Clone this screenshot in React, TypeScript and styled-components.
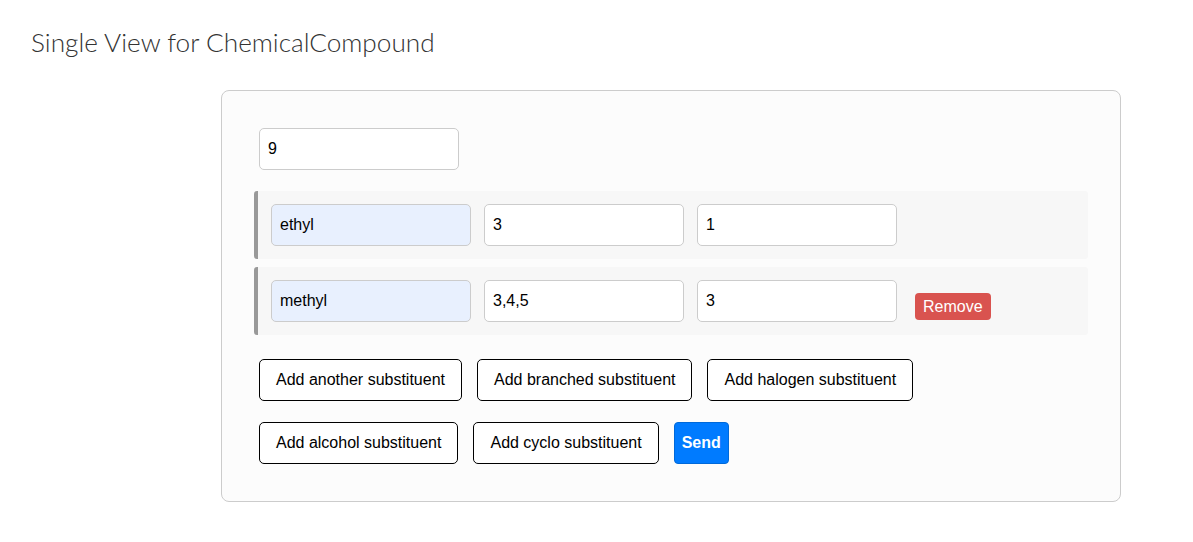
import React from 'react';
import { createGlobalStyle, styled } from 'styled-components';

const GlobalStyle = createGlobalStyle`
  body {
    margin: 0;
    background: #ffffff;
    font-family: 'Liberation Sans', Arial, sans-serif;
  }
`;

const substituents = [
  { name: 'ethyl', position: '3', count: '1', removable: false },
  { name: 'methyl', position: '3,4,5', count: '3', removable: true },
];

const App: React.FC = () => {
  return (
    <Page>
      <GlobalStyle />
      <Title>Single View for ChemicalCompound</Title>
      <Card>
        <Field defaultValue='9' />
        <Rows>
          {substituents.map((s) => (
            <SubRow key={s.name}>
              <Field defaultValue={s.name} $filled />
              <Field defaultValue={s.position} />
              <Field defaultValue={s.count} />
              {s.removable && <RemoveButton type='button'>Remove</RemoveButton>}
            </SubRow>
          ))}
        </Rows>
        <Actions>
          <ActionLine>
            <OutlineButton type='button'>Add another substituent</OutlineButton>
            <OutlineButton type='button'>Add branched substituent</OutlineButton>
            <OutlineButton type='button'>Add halogen substituent</OutlineButton>
          </ActionLine>
          <ActionLine>
            <OutlineButton type='button'>Add alcohol substituent</OutlineButton>
            <OutlineButton type='button'>Add cyclo substituent</OutlineButton>
            <SendButton type='button'>Send</SendButton>
          </ActionLine>
        </Actions>
      </Card>
    </Page>
  );
};

export default App;

const Page = styled.div`
  padding: 24px 0 40px 0;
`;

const Title = styled.h1`
  margin: 0 0 30px 31px;
  font-family: Lato, 'Open Sans', sans-serif;
  font-weight: 300;
  font-size: 26.2px;
  line-height: 36px;
  color: #333333;
`;

const Card = styled.div`
  margin-left: 221px;
  width: 900px;
  box-sizing: border-box;
  padding: 37px 32px 37px 37px;
  border: 1px solid #cccccc;
  border-radius: 8px;
  background: #fcfcfc;
`;

const Field = styled.input<{ $filled?: boolean }>`
  width: 200px;
  height: 42px;
  box-sizing: border-box;
  padding: 0 8px;
  border: 1px solid #cccccc;
  border-radius: 5px;
  background: ${(p) => (p.$filled ? '#e8f0fe' : '#ffffff')};
  font-family: 'Liberation Sans', Arial, sans-serif;
  font-size: 16px;
  color: #000000;
  outline: none;
`;

const Rows = styled.div`
  display: flex;
  flex-direction: column;
  gap: 8px;
  margin: 21px 0 0 -5px;
`;

const SubRow = styled.div`
  display: flex;
  align-items: center;
  gap: 13px;
  padding: 13px 13px;
  border-left: 4px solid #999999;
  border-radius: 3px;
  background: #f7f7f7;
`;

const RemoveButton = styled.button`
  margin: 10px 0 0 5px;
  padding: 4px 8px;
  border: none;
  border-radius: 4px;
  background: #d9534f;
  color: #ffffff;
  font-family: 'Liberation Sans', Arial, sans-serif;
  font-size: 16px;
  line-height: 19px;
`;

const Actions = styled.div`
  display: flex;
  flex-direction: column;
  gap: 21px;
  margin-top: 24px;
`;

const ActionLine = styled.div`
  display: flex;
  gap: 15px;
`;

const OutlineButton = styled.button`
  height: 42px;
  padding: 0 16px;
  border: 1px solid #000000;
  border-radius: 5px;
  background: #ffffff;
  color: #000000;
  font-family: 'Liberation Sans', Arial, sans-serif;
  font-size: 16px;
`;

const SendButton = styled.button`
  height: 42px;
  padding: 0 7px;
  border: 1px solid #0069d9;
  border-radius: 4px;
  background: #007bff;
  color: #ffffff;
  font-family: 'Liberation Sans', Arial, sans-serif;
  font-weight: 700;
  font-size: 16px;
`;
